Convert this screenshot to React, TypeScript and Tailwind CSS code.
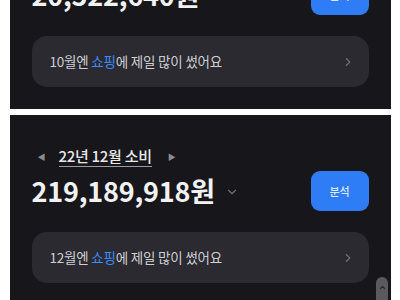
import { ChevronDown, ChevronRight, ChevronUp } from 'lucide-react';

type Props = { month: string; amount: string; title: string };

function SpendPanel({ month, amount, title }: Props) {
  return (
    <div className="relative w-[381px] bg-[#17171b] px-[22px] pt-[35px] pb-[22px]">
      {/* 월 선택 */}
      <div className="flex items-center h-[14px]">
        <span className="text-[8px] leading-none text-[#8a8a90] ml-[6px]">◀</span>
        <span className="ml-[13px] text-[15px] leading-none font-medium text-[#e8e8ea] border-b border-[#9a9aa0] pb-[3px] tracking-[-0.3px]">
          {title}
        </span>
        <span className="ml-[16px] text-[8px] leading-none text-[#8a8a90]">▶</span>
      </div>

      {/* 금액 + 분석 버튼 */}
      <div className="flex items-center justify-between mt-[7px]">
        <div className="flex items-center">
          <span className="text-[27px] leading-[40px] font-semibold text-[#f2f2f4] tracking-[-0.2px]">
            {amount}
          </span>
          <ChevronDown className="ml-[10px] mt-[2px] text-[#6e6e74]" size={14} strokeWidth={2} />
        </div>
        <button className="w-[58px] h-[40px] rounded-[9px] bg-[#2f7df6] text-[11px] text-[#dce8ff] font-medium">
          분석
        </button>
      </div>

      {/* 요약 카드 */}
      <div className="mt-[21px] h-[51px] rounded-[15px] bg-[#2a2a30] flex items-center justify-between pl-[18px] pr-[14px]">
        <span className="text-[13.5px] text-[#cfcfd3] tracking-[-0.2px]">
          {month}엔 <span className="text-[#3d8bf7]">쇼핑</span>에 제일 많이 썼어요
        </span>
        <ChevronRight className="text-[#6e6e74]" size={14} strokeWidth={2} />
      </div>
    </div>
  );
}

export default function App() {
  return (
    <div
      className="relative w-[400px] h-[300px] overflow-hidden bg-white"
      style={{ fontFamily: '"Noto Sans CJK KR", "Noto Sans", sans-serif' }}
    >
      <div className="flex flex-col items-center gap-[6px] -mt-[81px]">
        <SpendPanel month="10월" amount="20,522,640원" title="22년 10월 소비" />
        <SpendPanel month="12월" amount="219,189,918원" title="22년 12월 소비" />
      </div>
      {/* 스크롤 버튼 */}
      <div className="absolute left-[376px] top-[277px] w-[12px] h-[30px] rounded-full bg-[#5a5a5e] flex justify-center pt-[6px]">
        <ChevronUp className="text-[#2a2a2e]" size={9} strokeWidth={3} />
      </div>
    </div>
  );
}
